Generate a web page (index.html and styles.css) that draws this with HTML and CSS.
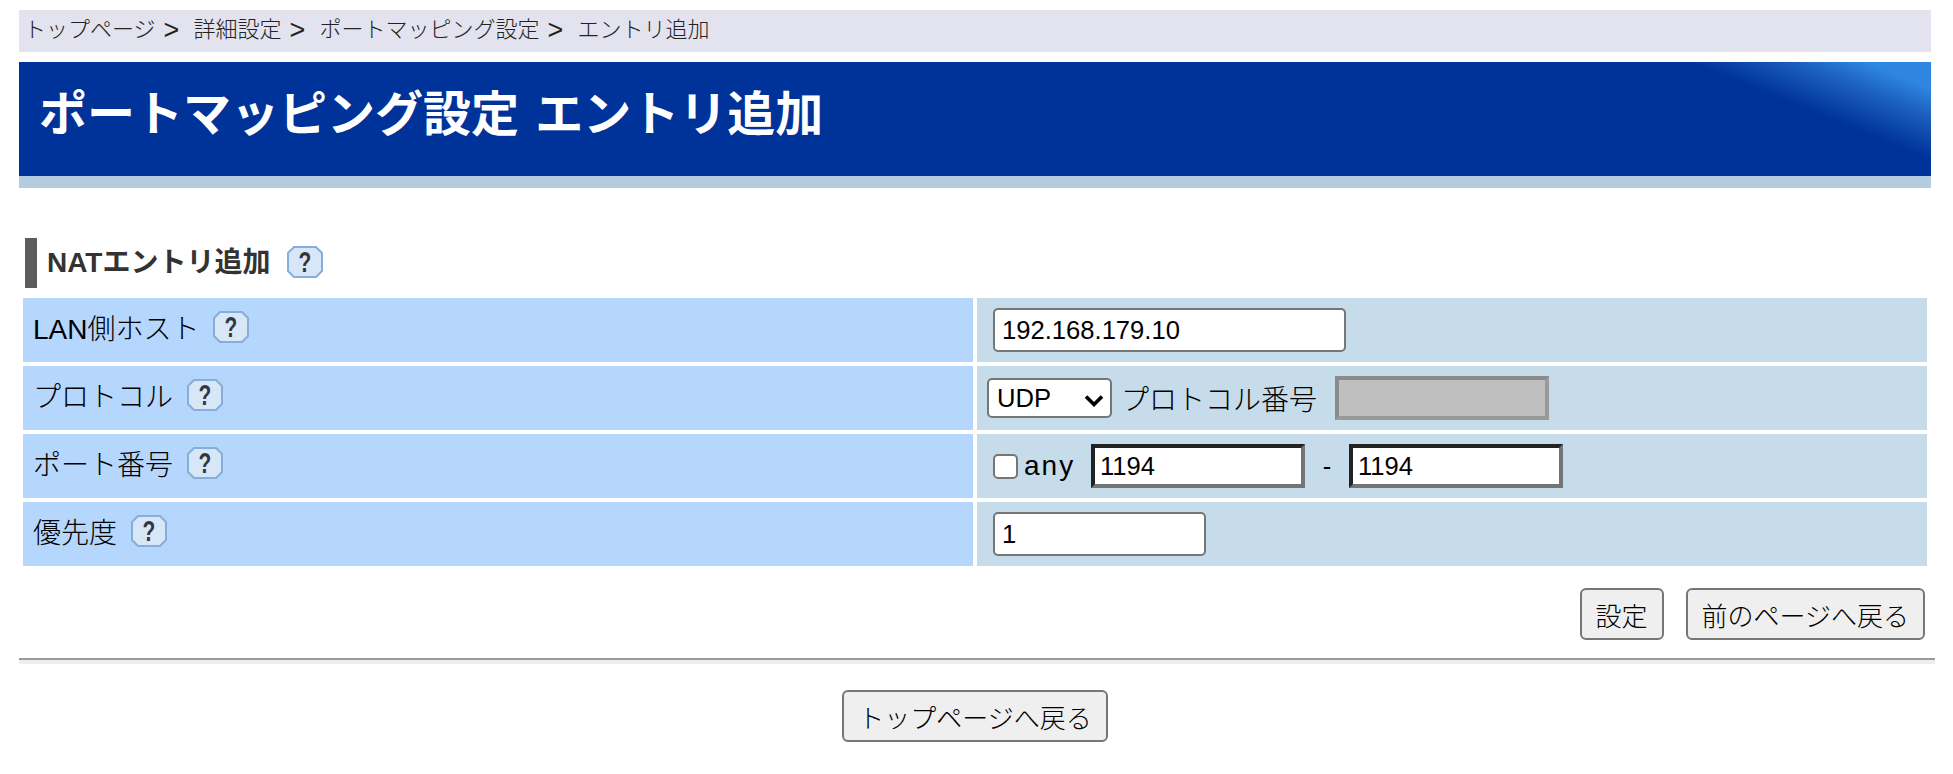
FILE: index.html
```html
<!DOCTYPE html>
<html lang="ja">
<head>
<meta charset="utf-8">
<title>ポートマッピング設定 エントリ追加</title>
<link rel="stylesheet" href="styles.css">
</head>
<body>
<nav class="crumbs"><span>トップページ</span><span class="sep">&gt;</span><span>詳細設定</span><span class="sep">&gt;</span><span>ポートマッピング設定</span><span class="sep">&gt;</span><span>エントリ追加</span></nav>
<h1 class="title">ポートマッピング設定 エントリ追加</h1>
<h2 class="section"><span class="section-text">NATエントリ追加</span><svg class="help" viewBox="0 0 36 32"><polygon class="help-shape" points="7,1 29,1 35,7 35,25 29,31 7,31 1,25 1,7"/><text class="help-mark" transform="translate(18 26) scale(.72 1)" text-anchor="middle">?</text></svg></h2>
<table class="form">
  <tr>
    <th><div class="label">LAN側ホスト<svg class="help" viewBox="0 0 36 32"><polygon class="help-shape" points="7,1 29,1 35,7 35,25 29,31 7,31 1,25 1,7"/><text class="help-mark" transform="translate(18 26) scale(.72 1)" text-anchor="middle">?</text></svg></div></th>
    <td><div class="field"><input class="text host" type="text" value="192.168.179.10"></div></td>
  </tr>
  <tr>
    <th><div class="label">プロトコル<svg class="help" viewBox="0 0 36 32"><polygon class="help-shape" points="7,1 29,1 35,7 35,25 29,31 7,31 1,25 1,7"/><text class="help-mark" transform="translate(18 26) scale(.72 1)" text-anchor="middle">?</text></svg></div></th>
    <td><div class="field proto"><select class="select"><option>UDP</option></select><span class="proto-label">プロトコル番号</span><input class="off" type="text" disabled></div></td>
  </tr>
  <tr>
    <th><div class="label">ポート番号<svg class="help" viewBox="0 0 36 32"><polygon class="help-shape" points="7,1 29,1 35,7 35,25 29,31 7,31 1,25 1,7"/><text class="help-mark" transform="translate(18 26) scale(.72 1)" text-anchor="middle">?</text></svg></div></th>
    <td><div class="field port"><input class="check" type="checkbox"><span class="any">any</span><input class="bevel" type="text" value="1194"><span class="dash">-</span><input class="bevel" type="text" value="1194"></div></td>
  </tr>
  <tr>
    <th><div class="label">優先度<svg class="help" viewBox="0 0 36 32"><polygon class="help-shape" points="7,1 29,1 35,7 35,25 29,31 7,31 1,25 1,7"/><text class="help-mark" transform="translate(18 26) scale(.72 1)" text-anchor="middle">?</text></svg></div></th>
    <td><div class="field"><input class="text prio" type="text" value="1"></div></td>
  </tr>
</table>
<div class="actions"><button class="btn" type="button">設定</button><button class="btn" type="button">前のページへ戻る</button></div>
<hr class="rule">
<div class="bottom"><button class="btn" type="button">トップページへ戻る</button></div>
</body>
</html>
```
FILE: styles.css
```css
* { box-sizing: border-box; }
html, body { background: #fff; }
body {
  margin: 0;
  padding: 10px 22px 0 19px;
  color: #000;
  font-family: "Liberation Sans", "Noto Sans CJK JP", sans-serif;
  font-size: 28px;
  font-weight: 300;
}
.crumbs {
  display: flex;
  align-items: center;
  height: 42px;
  padding: 0 5px 3px;
  background: #e3e3ef;
  color: #222;
  font-size: 22px;
  line-height: 30px;
}
.sep { width: 38px; padding-left: 8px; font-size: 27px; }
.title {
  display: flex;
  align-items: center;
  height: 126px;
  margin: 10px 0 0;
  padding: 0 0 8px 20px;
  border-bottom: 12px solid #b5cce0;
  background: linear-gradient(22deg, #003399 89%, #1a5cbc 93.5%, #2e86e0 97%);
  background-clip: padding-box;
  color: #fff;
  font-size: 48px;
  font-weight: 700;
  line-height: 1;
  word-spacing: 3px;
  white-space: pre;
}
.section {
  display: flex;
  align-items: center;
  gap: 17px;
  height: 50px;
  margin: 50px 0 0 6px;
  padding: 0 0 2px 10px;
  border-left: 12px solid #5c5c5c;
  color: #333;
  font-size: 28px;
  font-weight: 700;
}
.section-text { margin-bottom: 4px; }
.help { width: 36px; height: 32px; flex: none; }
.help-shape { fill: #d8e7f7; stroke: #86aedb; stroke-width: 2; }
.help-mark {
  fill: #33373d;
  font-family: "Liberation Sans", sans-serif;
  font-size: 29px;
  font-weight: 700;
}
.form {
  width: 100%;
  margin-top: 6px;
  border-collapse: separate;
  border-spacing: 4px;
  table-layout: fixed;
}
.form th, .form td { height: 64px; padding: 0; }
.form th {
  padding: 0 0 7px 10px;
  background: #b5d6fd;
  font-weight: 300;
  text-align: left;
}
.form td { padding-left: 10px; background: #c6dcea; }
.label { display: flex; align-items: center; gap: 14px; }
.field { display: flex; align-items: center; font-size: 25.6px; }
input, select, button { font: inherit; color: #000; margin: 0; }
.text {
  height: 44px;
  padding: 0 7px;
  margin-left: 6px;
  border: 2px solid #767676;
  border-radius: 5px;
  background: #fff;
}
.host { width: 353px; }
.prio { width: 213px; }
.select {
  appearance: none;
  width: 125px;
  height: 40px;
  padding: 0 0 0 8px;
  border: 2px solid #767676;
  border-radius: 5px;
  background: #fff url("data:image/svg+xml;utf8,<svg xmlns='http://www.w3.org/2000/svg' width='20' height='13'><path d='M2 2.5l8 8 8-8' fill='none' stroke='black' stroke-width='3.6'/></svg>") no-repeat 95px 14px;
}
.proto-label { margin: 0 18px 0 9px; font-size: 28px; }
.off {
  width: 214px;
  height: 44px;
  border-width: 4px;
  border-style: solid;
  border-color: #8a8a8a #999 #999 #8a8a8a;
  border-radius: 0;
  background: #bfbfbf;
}
.check {
  appearance: none;
  width: 25px;
  height: 25px;
  margin-left: 6px;
  border: 2px solid #767676;
  border-radius: 5px;
  background: #fff;
}
.any { width: 67px; margin-left: 6px; font-size: 28px; letter-spacing: 2px; }
.bevel {
  width: 214px;
  height: 44px;
  padding: 0 5px;
  border-width: 4px;
  border-style: solid;
  border-color: #222 #757575 #757575 #222;
  background: #fff;
}
.dash { width: 44px; text-align: center; }
.btn {
  height: 52px;
  padding: 0 14px;
  border: 2px solid #767676;
  border-radius: 6px;
  background: #efefef;
  font-size: 26px;
}
.actions {
  display: flex;
  justify-content: flex-end;
  gap: 22px;
  margin-top: 18px;
  padding-right: 6px;
}
.rule {
  height: 6px;
  margin: 18px -4px 0 0;
  border: 0;
  border-top: 2px solid #9a9a9a;
  background: #eee;
}
.bottom { display: flex; justify-content: center; margin-top: 26px; }
```
